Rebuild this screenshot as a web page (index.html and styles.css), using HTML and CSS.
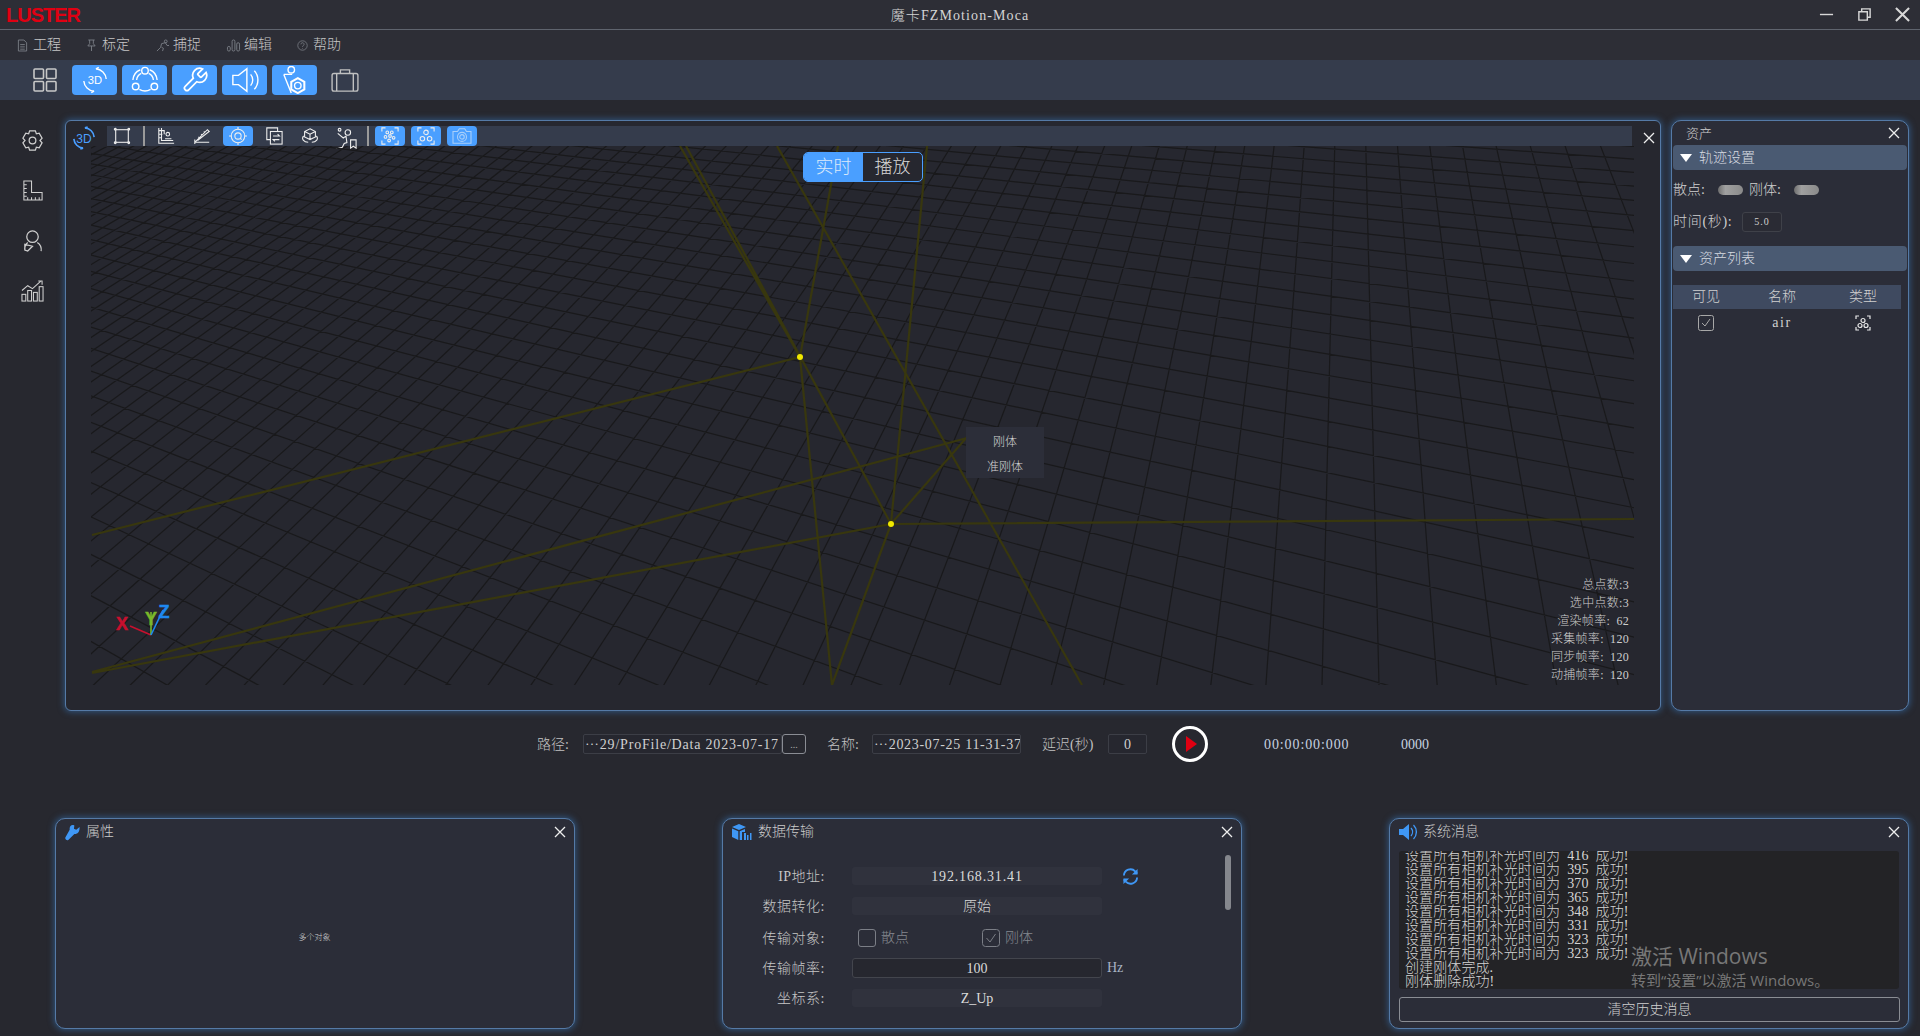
FILE: index.html
```html
<!DOCTYPE html>
<html lang="zh-CN">
<head>
<meta charset="utf-8">
<title>魔卡FZMotion-Moca</title>
<link rel="stylesheet" href="styles.css">
</head>
<body>
<header class="titlebar">
  <div class="logo">LUSTER</div>
  <div class="apptitle">魔卡FZMotion-Moca</div>
  <div class="winctl">
    <svg class="ic-win" viewBox="0 0 16 16"><path d="M1 8h14"/></svg>
    <svg class="ic-win" viewBox="0 0 16 16"><path d="M2 5h9v9H2zM5 5V2h9v9h-3"/></svg>
    <svg class="ic-win thick" viewBox="0 0 16 16"><path d="M1 1l14 14M15 1L1 15"/></svg>
  </div>
</header>
<nav class="menubar">
  <div class="menu"><svg class="ic-menu" viewBox="0 0 12 14"><path d="M1.500 1h6l3 3v9h-9zM3.500 6h5M3.500 8.500h5M3.500 11h5"/></svg><span>工程</span></div>
  <div class="menu"><svg class="ic-menu" viewBox="0 0 12 14"><path d="M2.500 1h7M4 1v4L2 7.500h8L8 5V1M6 7.500V13"/></svg><span>标定</span></div>
  <div class="menu"><svg class="ic-menu wide" viewBox="0 0 16 14"><circle cx="11.500" cy="2.500" r="1.500"/><path d="M2 13l4-4 1-4 4-1 2 3h2M7 9l2 1-1 3"/></svg><span>捕捉</span></div>
  <div class="menu"><svg class="ic-menu wide" viewBox="0 0 16 14"><rect x="1.500" y="8" width="3" height="5" rx="1.500"/><rect x="6.500" y="1" width="3" height="12" rx="1.500"/><rect x="11.500" y="4" width="3" height="9" rx="1.500"/></svg><span>编辑</span></div>
  <div class="menu"><svg class="ic-menu" viewBox="0 0 14 14"><circle cx="7" cy="7" r="6"/><path d="M5 5.500a2 2 0 1 1 3 1.700c-.7.400-1 .8-1 1.600M7 10.500v.8"/></svg><span>帮助</span></div>
</nav>
<section class="toolbar">
  <svg class="ic-tool grid" viewBox="0 0 24 24"><rect x="1" y="1" width="9.500" height="9.500" rx="1"/><rect x="13.500" y="1" width="9.500" height="9.500" rx="1"/><rect x="1" y="13.500" width="9.500" height="9.500" rx="1"/><rect x="13.500" y="13.500" width="9.500" height="9.500" rx="1"/></svg>
  <button class="tbtn"><svg class="ic-tool" viewBox="0 0 30 30"><text x="15" y="19.500" class="t3d">3D</text><path d="M16 3a12 12 0 0 1 11 11M14 27A12 12 0 0 1 3 16"/><path d="M16 3l3 -1.500M14 27l-3 1.500"/></svg></button>
  <button class="tbtn"><svg class="ic-tool" viewBox="0 0 30 30"><circle cx="15" cy="5" r="3.500"/><circle cx="5" cy="22" r="3.500"/><circle cx="25" cy="22" r="3.500"/><path d="M10 4A13 13 0 0 0 2 15M20 4A13 13 0 0 1 28 15M9 25a12 12 0 0 0 12 0"/><path d="M11 8a9 9 0 0 0-5 7M19 8a9 9 0 0 1 5 7"/></svg></button>
  <button class="tbtn"><svg class="ic-tool" viewBox="0 0 24 24"><path d="M14.700 6.300a1 1 0 0 0 0 1.400l1.600 1.600a1 1 0 0 0 1.400 0l3.770-3.770a6 6 0 0 1-7.940 7.940l-6.910 6.910a2.120 2.120 0 0 1-3-3l6.910-6.910a6 6 0 0 1 7.940-7.940l-3.760 3.760z"/></svg></button>
  <button class="tbtn"><svg class="ic-tool" viewBox="0 0 30 30"><path d="M2 10h6l9-7v24l-9-7H2zM21 9a9 9 0 0 1 0 12M25 5a15 15 0 0 1 0 20"/></svg></button>
  <button class="tbtn"><svg class="ic-tool" viewBox="0 0 30 30"><circle cx="11" cy="4" r="3.500"/><path d="M3 9h9M3 9l8 20"/><path class="heavy" d="M18 13l7 4v8l-7 4-7-4v-8z"/><circle cx="18" cy="21" r="3.500"/></svg></button>
  <svg class="ic-tool case" viewBox="0 0 30 26"><rect x="1" y="6" width="28" height="19" rx="2"/><path d="M10 6V2h10v4M6 6v19M24 6v19"/></svg>
</section>

<main class="main">
  <aside class="sidebar">
    <svg class="ic-side" viewBox="0 0 24 24"><path d="M9 2h6l1 3 3-.7 3 5.200-2.200 2.500 2.200 2.500-3 5.200-3-.7-1 3H9l-1-3-3 .7-3-5.200L4.200 12 2 9.500l3-5.200 3 .7z"/><circle cx="12" cy="12" r="3.500"/></svg>
    <svg class="ic-side thin" viewBox="0 0 24 24"><path d="M3 2h8v12h11v8H3zM3 6h3M3 10h3M3 14h3M3 18h3M7 22v-3M11 22v-3M15 22v-3M19 22v-3"/></svg>
    <svg class="ic-side" viewBox="0 0 24 24"><circle cx="12" cy="8" r="6"/><path d="M4 22a9 9 0 0 1 3-8M17 14a9 9 0 0 1 4 9M4 16l8 2-5 5-3-1z"/></svg>
    <svg class="ic-side thin" viewBox="0 0 24 24"><rect x="1" y="16" width="4" height="7"/><rect x="7" y="12" width="4" height="11"/><rect x="13" y="14" width="4" height="9"/><rect x="19" y="8" width="4" height="15"/><path d="M1 12l6-5 5 3 9-8M18 2h4v4"/></svg>
  </aside>

  <section class="viewport">
    <div class="vp-head">
      <svg class="ic-3d" viewBox="0 0 26 26"><text x="13" y="18" class="t3d">3D</text><path d="M14 2a11 11 0 0 1 10 10M12 24A11 11 0 0 1 2 14"/><path d="M14 2l3-1M12 24l-3 1"/></svg>
      <div class="strip">
        <span class="sitem"><svg class="ic-s" viewBox="0 0 20 20"><rect x="3" y="3" width="14" height="14"/><circle cx="2.500" cy="2.500" r="1"/><circle cx="17.500" cy="2.500" r="1"/><circle cx="2.500" cy="17.500" r="1"/><circle cx="17.500" cy="17.500" r="1"/></svg></span>
        <span class="sep"></span>
        <span class="sitem"><svg class="ic-s" viewBox="0 0 20 20"><path d="M2 1v17h17M5 1v14h13M2 4h6v4M2 8h4M2 12h3M9 13h7"/><circle cx="12" cy="8" r="2"/></svg></span>
        <span class="sitem"><svg class="ic-s" viewBox="0 0 20 20"><path d="M2 17h16M2 17L16 3l2 2L5 15M6 11l1 1M9 8l1 1M12 5l1 1M2 14v5"/></svg></span>
        <span class="sitem on"><svg class="ic-s" viewBox="0 0 20 20"><circle cx="10" cy="10" r="7.500"/><circle cx="10" cy="10" r="3.500"/><path d="M12.500 12.500l1.500 1.500M10 0v2.500M10 17.500V20M0 10h2.500M17.500 10H20"/></svg></span>
        <span class="sitem"><svg class="ic-s" viewBox="0 0 20 20"><path d="M14 5V1H2v13h4"/><rect x="6" y="5" width="13" height="14"/><path d="M9 10h7l-2-2M16 14H9l2 2"/></svg></span>
        <span class="sitem"><svg class="ic-s" viewBox="0 0 20 20"><path d="M10 2l6 3v6l-6 3-6-3V5zM4 5l6 3 6-3M10 8v6M3 10c-3 3 0 7 5 7M17 10c3 3 0 7-5 7"/></svg></span>
        <span class="sitem"><svg class="ic-s big" viewBox="0 0 24 24"><circle cx="5" cy="3" r="1.500"/><circle cx="14" cy="6" r="3"/><path d="M3 7l6 5 3-2 1 7-3 1-2 4-7 2M17 14h6v9l-3-2-3 2z"/></svg></span>
        <span class="sep"></span>
        <span class="sitem on"><svg class="ic-s" viewBox="0 0 20 20"><path d="M1 5V1h4M15 1h4v4M19 15v4h-4M5 19H1v-4"/><circle cx="7" cy="6" r="1.500"/><circle cx="12" cy="6" r="1.500"/><circle cx="5" cy="11" r="1.500"/><circle cx="10" cy="10" r="1.500"/><circle cx="14" cy="12" r="1.500"/><circle cx="9" cy="15" r="1.500"/></svg></span>
        <span class="sitem on"><svg class="ic-s" viewBox="0 0 20 20"><path d="M1 5V1h4M15 1h4v4M19 15v4h-4M5 19H1v-4"/><circle cx="10" cy="6" r="2.500"/><circle cx="6" cy="13" r="2.500"/><circle cx="14" cy="13" r="2.500"/></svg></span>
        <span class="sitem on"><svg class="ic-s dim" viewBox="0 0 22 20"><path d="M1 5h5l2-3h6l2 3h5v13H1z"/><circle cx="11" cy="11" r="5"/><circle cx="11" cy="11" r="2.500"/></svg></span>
      </div>
      <svg class="ic-x" viewBox="0 0 12 12"><path d="M1 1l10 10M11 1L1 11"/></svg>
    </div>
    <div class="canvas">
      <svg class="scene" viewBox="91 146 1543 539" width="1543" height="539">
        <path id="grid" class="gridline"/>
        <path class="ray" d="M686 146L891 524M680 146L800 357M838 146L800 357L832 685M777 146L1082 685M927 146L891 524M92 535L800 357M92 672L967 438M92 673L891 524M891 524L967 437M891 524L1634 519M891 524L832 685"/>
        <circle class="pt" cx="800" cy="357" r="3"/>
        <circle class="pt" cx="891" cy="524" r="3"/>
        <path class="ax-x" d="M130 626L151 635"/>
        <path class="ax-y" d="M151 635V612"/>
        <path class="ax-z" d="M151 635L163 610"/>
        <text x="122" y="630" class="lb-x">X</text>
        <text x="151" y="625" class="lb-y">Y</text>
        <text x="164" y="618" class="lb-z">Z</text>
      </svg>
      <div class="seg"><span class="seg-on">实时</span><span class="seg-off">播放</span></div>
      <div class="ctx"><div>刚体</div><div>准刚体</div></div>
      <div class="stats">
        <div>总点数:3</div><div>选中点数:3</div><div>渲染帧率: 62</div><div>采集帧率: 120</div><div>同步帧率: 120</div><div>动捕帧率: 120</div>
      </div>
    </div>
  </section>

  <section class="assets">
    <div class="as-head"><span>资产</span><svg class="ic-x" viewBox="0 0 12 12"><path d="M1 1l10 10M11 1L1 11"/></svg></div>
    <div class="sect"><i class="tri"></i>轨迹设置</div>
    <div class="as-row r1">散点:<span class="pill"></span><span class="lab2">刚体:</span><span class="pill"></span></div>
    <div class="as-row r2"><span class="timelab">时间(秒):</span><span class="timebox">5.0</span></div>
    <div class="sect s2"><i class="tri"></i>资产列表</div>
    <div class="thead"><span>可见</span><span>名称</span><span>类型</span></div>
    <div class="trow">
      <span><svg class="ic-check" viewBox="0 0 16 16"><rect x=".5" y=".5" width="15" height="15" rx="2"/><path d="M4 8l3 3 5-7"/></svg></span>
      <span class="air">air</span>
      <span><svg class="ic-body" viewBox="0 0 16 16"><path d="M1 4V1h3M12 1h3v3M15 12v3h-3M4 15H1v-3"/><circle cx="8" cy="5.500" r="2"/><circle cx="5" cy="10.500" r="2"/><circle cx="11" cy="10.500" r="2"/></svg></span>
    </div>
  </section>
</main>

<section class="playback">
  <span class="pb-l1">路径:</span>
  <span class="pb-in w-path">⋯29/ProFile/Data 2023-07-17</span>
  <span class="pb-more">...</span>
  <span class="pb-l2">名称:</span>
  <span class="pb-in w-name">⋯2023-07-25 11-31-37</span>
  <span class="pb-l3">延迟(秒)</span>
  <span class="pb-in w-delay">0</span>
  <span class="play"><svg class="ic-play" viewBox="0 0 12 16"><path d="M1 0l11 8-11 8z"/></svg></span>
  <span class="pb-time">00:00:00:000</span>
  <span class="pb-frame">0000</span>
</section>

<section class="bottom">
  <article class="panel">
    <div class="p-head">
      <svg class="ic-head w" viewBox="0 0 16 18"><path d="M15.500 3l-3.500 3-2.500-1 .5-3.500c-3-1.500-5.500 1-5 4.500L.5 14c-1 1.500 1 4 3 3l6.500-6.500c3 .5 6-2 5.500-7.500z"/></svg>
      <span>属性</span>
      <svg class="ic-x" viewBox="0 0 12 12"><path d="M1 1l10 10M11 1L1 11"/></svg>
    </div>
    <div class="multi">多个对象</div>
  </article>

  <article class="panel">
    <div class="p-head">
      <svg class="ic-head cube" viewBox="0 0 20 16"><path d="M7 0l7 3-7 3-7-3zM0 4.500l6.300 2.700V16L0 13zM7.700 7.200l5.300-2.300V8H10v8H7.700z"/><path d="M12 9h2v7h-2zM15 11h1.500v5H15zM18 9h1.500v7H18z"/></svg>
      <span>数据传输</span>
      <svg class="ic-x" viewBox="0 0 12 12"><path d="M1 1l10 10M11 1L1 11"/></svg>
    </div>
    <div class="d-body">
      <div class="form">
        <div class="f-row"><label>IP地址:</label><span class="field ip">192.168.31.41</span><svg class="ic-ref" viewBox="0 0 18 18"><path d="M2 8a7 7 0 0 1 12-4.500L16 6M16 10a7 7 0 0 1-12 4.500L2 12"/><path class="solid" d="M16.500 1v6h-6zM1.500 17v-6h6z"/></svg></div>
        <div class="f-row"><label>数据转化:</label><span class="field">原始</span></div>
        <div class="f-row tall"><label>传输对象:</label>
          <span class="checks">
            <span class="chk c1"><i class="box"></i>散点</span>
            <span class="chk"><svg class="box-svg" viewBox="0 0 18 18"><rect x=".5" y=".5" width="17" height="17" rx="3"/><path d="M4.500 9l3.500 4 5.500-8"/></svg>刚体</span>
          </span>
        </div>
        <div class="f-row"><label>传输帧率:</label><span class="field input">100</span><span class="hz">Hz</span></div>
        <div class="f-row"><label>坐标系:</label><span class="field">Z_Up</span></div>
      </div>
      <div class="scrollbar"></div>
    </div>
  </article>

  <article class="panel sys">
    <div class="p-head">
      <svg class="ic-head spk" viewBox="0 0 18 18"><path d="M0 6h4l6-5v16l-6-5H0z"/><path class="st" d="M12 5a6 6 0 0 1 0 8M14.500 2a10 10 0 0 1 0 14"/></svg>
      <span>系统消息</span>
      <svg class="ic-x" viewBox="0 0 12 12"><path d="M1 1l10 10M11 1L1 11"/></svg>
    </div>
    <div class="log">
      <div class="log-in">
        <div>设置所有相机补光时间为 416 成功!</div>
        <div>设置所有相机补光时间为 395 成功!</div>
        <div>设置所有相机补光时间为 370 成功!</div>
        <div>设置所有相机补光时间为 365 成功!</div>
        <div>设置所有相机补光时间为 348 成功!</div>
        <div>设置所有相机补光时间为 331 成功!</div>
        <div>设置所有相机补光时间为 323 成功!</div>
        <div>设置所有相机补光时间为 323 成功!</div>
        <div>创建刚体完成.</div>
        <div>刚体删除成功!</div>
      </div>
    </div>
    <button class="clear">清空历史消息</button>
    <div class="wm"><div class="wm1">激活 Windows</div><div class="wm2">转到“设置”以激活 Windows。</div></div>
  </article>
</section>
<script src="script.js"></script>
</body>
</html>
```

FILE: styles.css
```css
* { box-sizing: border-box; }
html, body { margin: 0; padding: 0; }
body {
  width: 1920px; height: 1036px; overflow: hidden;
  background: #27282f; color: #d0d0d0;
  font-family: "Liberation Serif", "Noto Sans CJK SC", serif;
  font-size: 14px; font-weight: 300; line-height: 1;
}
svg { display: block; flex: none; fill: none; }

.titlebar { height: 30px; background: #2d2e36; border-bottom: 1px solid #5f646e; display: grid; grid-template-columns: 1fr auto 1fr; align-items: center; }
.logo { font: bold 20px "Liberation Sans", sans-serif; letter-spacing: -1px; color: #e00012; padding: 1px 0 0 6px; }
.apptitle { color: #d4d4d4; letter-spacing: 1.100px; padding-top: 2px; }
.winctl { display: flex; justify-content: flex-end; align-items: center; gap: 23px; padding-right: 10px; }
.ic-win { width: 15px; height: 15px; stroke: #d8d8d8; stroke-width: 1.500; }
.ic-win.thick { stroke-width: 2.200; }

.menubar { height: 30px; background: #2d2e36; display: flex; align-items: center; padding-left: 17px; gap: 25px; color: #c6c6c6; }
.menu { display: flex; align-items: center; gap: 5px; }
.ic-menu { width: 11px; height: 13px; stroke: #7a7e86; stroke-width: 1; }
.ic-menu.wide { width: 15px; margin-right: -2px; }

.toolbar { height: 40px; background: #353c4c; display: flex; align-items: center; padding-left: 33px; gap: 5px; }
.ic-tool { width: 30px; height: 30px; stroke: #fff; stroke-width: 1.500; }
.ic-tool.grid { width: 24px; height: 24px; stroke: #c8c8c8; stroke-width: 1.600; margin-right: 10px; }
.ic-tool.case { width: 28px; height: 24px; stroke: #c0c0c0; margin-left: 9px; }
.tbtn { width: 45px; height: 30px; background: #4a9fff; border: 0; border-radius: 4px; padding: 0; display: flex; align-items: center; justify-content: center; }
.tbtn .ic-tool { width: 28px; height: 28px; }
.tbtn .heavy { stroke-width: 2.200; }
.t3d { font: 12px "Liberation Sans", sans-serif; text-anchor: middle; fill: currentColor; stroke: none; }
.tbtn .t3d { fill: #fff; }

.main { height: 591px; margin-top: 20px; display: flex; padding-right: 11px; }
.sidebar { width: 65px; flex: none; display: flex; flex-direction: column; align-items: center; padding: 9px 1px 0 0; gap: 27px; }
.ic-side { width: 23px; height: 23px; stroke: #cfcfcf; stroke-width: 1.300; }
.ic-side.thin { stroke-width: 1.100; }

.viewport, .assets, .panel {
  border: 1px solid #557aa6; box-shadow: 0 0 6px 1px rgba(56, 120, 190, .55);
}
.viewport { width: 1596px; flex: none; background: #26272f; border-radius: 6px; }
.vp-head { height: 25px; padding: 5px 0 0 6px; display: flex; align-items: flex-start; }
.ic-3d { width: 24px; height: 24px; margin-right: 11px; stroke: #4a9fff; stroke-width: 1.800; color: #4a9fff; }
.ic-3d .t3d { font-size: 13px; }
.strip { width: 1525px; height: 20px; background: #353c4c; display: flex; gap: 6px; flex: none; }
.sitem { width: 30px; height: 20px; flex: none; display: flex; align-items: center; justify-content: center; border-radius: 4px; }
.sitem.on { background: #4a9fff; }
.ic-s { width: 18px; height: 18px; stroke: #eee; stroke-width: 1.200; }
.ic-s.big { width: 22px; height: 22px; margin-top: 4px; }
.ic-s.dim { stroke: #a9cffa; width: 20px; }
.sep { width: 2px; height: 20px; background: #9a9a9a; flex: none; }
.ic-x { width: 12px; height: 12px; stroke: #eee; stroke-width: 1.300; flex: none; }
.vp-head .ic-x { margin: 6px 0 0 11px; }

.canvas { position: relative; width: 1543px; height: 539px; margin-left: 25px; }
.scene { overflow: hidden; }
.gridline { stroke: #19191b; stroke-width: 1.200; }
.ray { stroke: #38370e; stroke-width: 2.200; }
.pt { fill: #f0e800; }
.ax-x { stroke: #c8102e; stroke-width: 1.600; }
.ax-y { stroke: #7ab82a; stroke-width: 1.600; }
.ax-z { stroke: #1e88f0; stroke-width: 1.600; }
.lb-x, .lb-y, .lb-z { font: bold 18px "Liberation Sans", sans-serif; text-anchor: middle; stroke-width: .5px; }
.lb-x { fill: #c8102e; stroke: #c8102e; } .lb-y { fill: #7ab82a; stroke: #7ab82a; } .lb-z { fill: #1e88f0; stroke: #1e88f0; }

.seg { position: absolute; left: 712px; top: 6px; width: 120px; height: 30px; border: 1px solid #4a9fff; border-radius: 5px; display: flex; font-size: 18px; overflow: hidden; background: #26272f; }
.seg span { display: flex; align-items: center; justify-content: center; }
.seg-on { width: 59px; background: #4a9fff; color: #dbe9fa; }
.seg-off { flex: 1; color: #d8d8d8; }

.ctx { position: absolute; left: 875px; top: 281px; width: 78px; height: 51px; padding-top: 3px; background: #2c2e39; font-size: 12px; text-align: center; color: #d4d4d4; }
.ctx div { height: 25px; line-height: 25px; }

.stats { position: absolute; right: 5px; bottom: 1px; text-align: right; font-size: 12px; line-height: 18px; word-spacing: 3px; letter-spacing: .3px; color: #cdcdcd; }

.assets { width: 238px; margin-left: 10px; flex: none; background: #2b2d38; border-radius: 10px; padding: 0 1px; }
.as-head { height: 24px; display: flex; align-items: center; justify-content: space-between; padding: 0 7px 0 13px; font-size: 13px; }
.sect { height: 25px; background: #4a5a72; border-radius: 4px; display: flex; align-items: center; padding-left: 7px; color: #d6dae1; }
.sect.s2 { margin-top: 14px; }
.tri { width: 0; height: 0; border-left: 6px solid transparent; border-right: 6px solid transparent; border-top: 8px solid #fff; margin-right: 7px; }
.as-row { display: flex; align-items: center; height: 20px; }
.as-row.r1 { margin-top: 10px; }
.as-row.r2 { margin-top: 12px; }
.pill { width: 25px; height: 10px; border-radius: 5px; background: linear-gradient(90deg, #6e6e6e, #a0a0a0 30%, #8a8a8a); margin-left: 13px; }
.lab2 { margin-left: 6px; }
.timelab { width: 69px; letter-spacing: .7px; }
.timebox { width: 40px; height: 20px; border: 1px solid #3f4149; border-radius: 3px; display: flex; align-items: center; justify-content: center; font-size: 10px; letter-spacing: 1px; background: #2a2b34; }
.thead { width: 228px; height: 24px; margin-top: 14px; background: #3f4a60; display: grid; grid-template-columns: 66px 86px 76px; align-items: center; text-align: center; }
.trow { width: 228px; height: 28px; display: grid; grid-template-columns: 66px 86px 76px; align-items: center; justify-items: center; }
.air { font-size: 14px; letter-spacing: 1.500px; }
.ic-check { width: 16px; height: 16px; stroke: #a8a8a8; stroke-width: 1; }
.ic-body { width: 16px; height: 16px; stroke: #e8e8e8; stroke-width: 1.200; }

.playback { height: 107px; display: flex; align-items: flex-start; padding: 23px 0 0 537px; }
.playback > span { height: 20px; display: flex; align-items: center; flex: none; padding-top: 1px; }
.pb-l1 { width: 46px; color: #c2c2c2; }
.pb-in { border: 1px solid #3c3e46; border-radius: 2px; white-space: nowrap; overflow: hidden; color: #d0d0d0; background: #26272f; }
.w-path { width: 199px; padding-left: 1px; letter-spacing: .8px; }
.pb-more { width: 24px; border: 1px solid #8a8d94; border-radius: 3px; justify-content: center; font-size: 10px; color: #aaa; }
.pb-l2 { width: 45px; margin-left: 21px; color: #c2c2c2; }
.w-name { width: 149px; padding-left: 1px; letter-spacing: .7px; }
.pb-l3 { width: 66px; margin-left: 21px; color: #c2c2c2; }
.w-delay { width: 39px; justify-content: center; }
.playback > .play { width: 36px; height: 36px; margin: -8px 0 0 25px; border: 3px solid #fff; border-radius: 50%; justify-content: center; padding: 0; }
.ic-play { width: 12px; height: 16px; fill: #e00012; margin-left: 2px; }
.pb-time { width: 137px; margin-left: 56px; color: #c8d2e0; letter-spacing: .9px; }
.pb-frame { color: #c8d2e0; }

.bottom { height: 211px; display: flex; justify-content: space-between; padding: 0 11px 0 55px; }
.panel { width: 520px; height: 211px; flex: none; background: #2b2d38; border-radius: 10px; position: relative; overflow: hidden; }
.p-head { height: 26px; display: flex; align-items: center; padding: 0 8px 0 9px; gap: 6px; color: #cacaca; }
.p-head .ic-x { margin-left: auto; }
.ic-head { width: 18px; height: 18px; fill: #3f97f5; }
.ic-head.w { width: 15px; height: 17px; }
.ic-head.cube { width: 20px; height: 16px; }
.ic-head .st { fill: none; stroke: #3f97f5; stroke-width: 1.300; }

.multi { text-align: center; font-size: 8px; margin-top: 89px; color: #d0d0d0; padding-right: 1px; }

.d-body { height: 175px; overflow: hidden; display: flex; }
.form { width: 420px; padding-top: 16px; }
.f-row { height: 30px; display: flex; align-items: center; }
.f-row.tall { height: 32px; padding-top: 2px; }
.f-row label { width: 102px; text-align: right; color: #c6c6c6; flex: none; margin-right: 27px; letter-spacing: .5px; padding-top: 1px; }
.field { width: 250px; height: 18px; flex: none; background: #30323d; border-radius: 3px; display: flex; align-items: center; justify-content: center; color: #dadada; padding-top: 1px; }
.field.ip { letter-spacing: .85px; }
.field.input { height: 20px; background: #26272f; border: 1px solid #43454d; }
.hz { margin-left: 5px; color: #a8b2c2; }
.ic-ref { width: 17px; height: 17px; margin-left: 20px; stroke: #3f97f5; stroke-width: 2; }
.ic-ref .solid { fill: #3f97f5; stroke: none; }
.checks { display: flex; padding-left: 6px; color: #85888f; }
.chk { display: flex; align-items: center; gap: 5px; }
.chk.c1 { width: 124px; }
.box { width: 18px; height: 18px; border: 1px solid #7b7e86; border-radius: 3px; display: block; }
.box-svg { width: 18px; height: 18px; stroke: #7b7e86; stroke-width: 1; }
.scrollbar { width: 6px; height: 55px; margin: 10px 0 0 82px; background: #85878d; border-radius: 3px; flex: none; }

.log { margin: 6px 9px 0; height: 138px; background: #232326; border-radius: 3px; overflow: hidden; padding-left: 6px; color: #d4d4d4; }
.log-in { margin-top: -2px; line-height: 14px; word-spacing: 3.500px; letter-spacing: .1px; }
.clear { display: block; width: 501px; height: 25px; margin: 8px 9px 0; background: transparent; border: 1px solid #8a8d94; border-radius: 3px; color: #d0d0d0; font: inherit; padding: 0; }
.wm { position: absolute; left: 241px; top: 124px; color: #777; font-family: "Open Sans", "Noto Sans CJK SC", sans-serif; font-weight: 400; pointer-events: none; white-space: nowrap; }
.wm1 { font-size: 21px; line-height: 26px; }
.wm2 { font-size: 15px; line-height: 22px; }
```

FILE: script.js
```js
// Ground-plane grid, projected with a homography from two vanishing points.
(function () {
  var V1 = [-1100, -40], V2 = [1350, -500], O = [1000, 685];
  var a = 0.022, b = 0.032;
  function project(u, v) {
    var w = a * u + b * v + 1;
    return [
      ((a * u * V1[0] + b * v * V2[0] + O[0]) / w).toFixed(1),
      ((a * u * V1[1] + b * v * V2[1] + O[1]) / w).toFixed(1)
    ];
  }
  var d = [];
  function seg(p, q) { d.push('M' + p[0] + ' ' + p[1] + 'L' + q[0] + ' ' + q[1]); }
  for (var i = -400; i <= 400; i++) {
    var v0 = (0.05 - 1 - a * i) / b, v1 = (200 - 1 - a * i) / b;
    seg(project(i, v0), project(i, v1));
    var u0 = (0.05 - 1 - b * i) / a, u1 = (200 - 1 - b * i) / a;
    seg(project(u0, i), project(u1, i));
  }
  document.getElementById('grid').setAttribute('d', d.join(''));
})();
```
